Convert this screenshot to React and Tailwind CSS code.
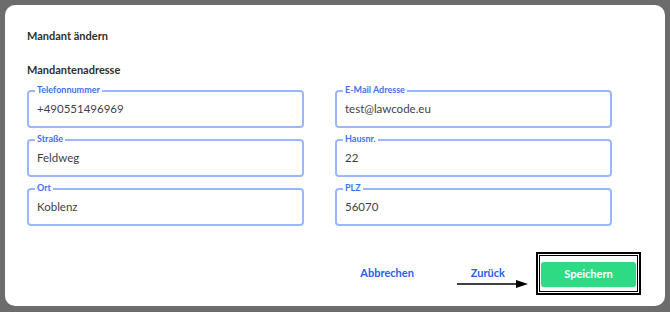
import React from 'react'

const fields = [
  { label: 'Telefonnummer', value: '+490551496969' },
  { label: 'E-Mail Adresse', value: 'test@lawcode.eu' },
  { label: 'Straße', value: 'Feldweg' },
  { label: 'Hausnr.', value: '22' },
  { label: 'Ort', value: 'Koblenz' },
  { label: 'PLZ', value: '56070' },
]

function Field({ label, value }) {
  return (
    <div className="relative h-[38px] rounded-[4px] border-2 border-[#9ab7fb] flex items-center px-[8px]">
      <span className="absolute -top-[8px] left-[6px] bg-white px-[2px] text-[9px] leading-[12px] font-bold text-[#3d71f6]">
        {label}
      </span>
      <span className="text-[11.5px] text-[#3f3f3f]">{value}</span>
    </div>
  )
}

export default function App() {
  return (
    <div className="w-[670px] h-[312px] bg-[#6c6c6c] pt-[5px] pl-[5px] pr-[5px]" style={{ fontFamily: 'Lato, "Noto Sans", sans-serif' }}>
      <div className="relative h-[301px] rounded-[10px] bg-white pt-[23px] px-[22px]">
        <h2 className="text-[11px] leading-[16px] font-bold text-[#2f2f2f]">Mandant ändern</h2>
        <h3 className="mt-[18px] text-[11px] leading-[16px] font-bold text-[#2f2f2f]">Mandantenadresse</h3>

        <div className="mt-[12px] w-[585px] grid grid-cols-2 gap-x-[31px] gap-y-[11px]">
          {fields.map((f) => (
            <Field key={f.label} {...f} />
          ))}
        </div>

        <div className="mt-[26px] flex items-center justify-end pr-[2px]">
          <button className="text-[11px] font-bold text-[#2461f2]">Abbrechen</button>
          <button className="ml-[57px] text-[11px] font-bold text-[#2461f2]">Zurück</button>
          <div className="ml-[31px] border-2 border-black p-[1px]">
            <div className="border border-black px-[1px] py-[4px]">
              <button className="w-[95px] h-[25px] rounded-[3px] bg-[#2ddb85] text-[11px] font-bold text-white shadow-sm">
                Speichern
              </button>
            </div>
          </div>
        </div>

        <svg className="absolute left-[452px] top-[274px]" width="71" height="10" viewBox="0 0 71 10">
          <line x1="0" y1="5" x2="61" y2="5" stroke="black" strokeWidth="1.6" />
          <polygon points="59,1 71,5 59,9" fill="black" />
        </svg>
      </div>
    </div>
  )
}
